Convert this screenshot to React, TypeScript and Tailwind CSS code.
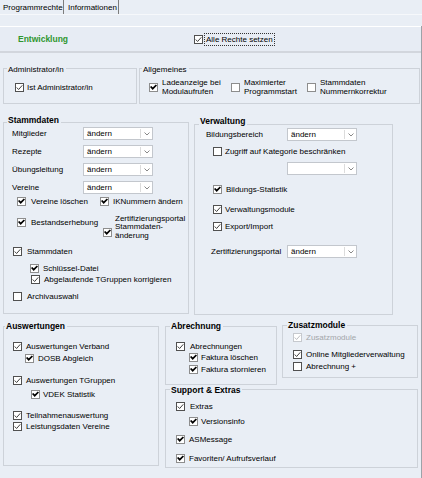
import React from 'react';

type Kind = 'thin' | 'bold' | 'empty' | 'emptyLight' | 'disabled';

function Box({ kind }: { kind: Kind }) {
  const stroke =
    kind === 'bold' || kind === 'emptyLight' ? '#8d8d8d' : kind === 'disabled' ? '#c6c9ce' : '#505050';
  return (
    <svg width="9" height="9" viewBox="0 0 9 9" className="block shrink-0">
      <rect x="0.5" y="0.5" width="8" height="8" fill="#ffffff" stroke={stroke} />
      {kind === 'thin' && (
        <polyline points="1.7,4.5 3.6,6.5 7.3,2.3" fill="none" stroke="#2b2b2b" strokeWidth="0.9" />
      )}
      {kind === 'bold' && (
        <polyline
          points="2.2,4.1 3.7,5.7 6.8,2.6"
          fill="none"
          stroke="#000000"
          strokeWidth="1.7"
          strokeLinecap="square"
        />
      )}
      {kind === 'disabled' && (
        <polyline points="1.7,4.5 3.6,6.5 7.3,2.3" fill="none" stroke="#b4b7bb" strokeWidth="0.9" />
      )}
    </svg>
  );
}

function Check({
  kind,
  children,
  className = '',
  gap = 'gap-[4px]',
  muted = false,
}: {
  kind: Kind;
  children: React.ReactNode;
  className?: string;
  gap?: string;
  muted?: boolean;
}) {
  return (
    <div className={`flex items-center h-[9px] ${gap} ${className}`}>
      <Box kind={kind} />
      <span className={`leading-[9px] whitespace-nowrap ${muted ? 'text-[#a3a6aa]' : ''}`}>{children}</span>
    </div>
  );
}

function Select({ value = 'ändern', className = '' }: { value?: string; className?: string }) {
  return (
    <div className={`w-[70px] h-[13px] shrink-0 bg-white border border-[#c3c7cd] flex items-center ${className}`}>
      <span className="flex-1 pl-[3px] leading-[11px] whitespace-nowrap">{value}</span>
      <span className="w-px h-[9px] bg-[#dcdcdc]" />
      <span className="w-[11px] flex justify-center">
        <svg width="6" height="4" viewBox="0 0 6 4" className="block">
          <polyline points="0.5,0.5 3,3 5.5,0.5" fill="none" stroke="#7b7b7b" strokeWidth="0.9" />
        </svg>
      </span>
    </div>
  );
}

function Group({
  title,
  bold = true,
  legendCls,
  className,
  children,
}: {
  title: string;
  bold?: boolean;
  legendCls: string;
  className: string;
  children: React.ReactNode;
}) {
  return (
    <fieldset className={`border border-[#cdd2d9] shrink-0 ${className}`}>
      <legend
        className={`pl-[1px] pr-[2px] leading-[9px] whitespace-nowrap ${legendCls} ${
          bold ? 'font-bold text-[8.5px]' : ''
        }`}
      >
        {title}
      </legend>
      {children}
    </fieldset>
  );
}

export default function App() {
  return (
    <div className="w-[422px] h-[478px] overflow-hidden bg-[#e9eef5] text-black text-[8px] leading-[9px] font-['Liberation_Sans',Arial,sans-serif]">
      {/* Tabs */}
      <div className="flex h-[15px] border-b border-[#f6f8fb]">
        <div className="w-[64px] h-full pl-[3px] pt-[1px] leading-[13px] border-r border-[#7d7d7d] whitespace-nowrap">
          Programmrechte
        </div>
        <div className="w-[55px] h-full pl-[4px] pt-[1px] leading-[13px] border-r border-[#7d7d7d] whitespace-nowrap">
          Informationen
        </div>
      </div>

      {/* Content area */}
      <div className="mt-[11px] w-[422px] h-[452px] border-r border-[#9da2a8]">
        {/* Header */}
        <div className="h-[27px] border-t border-white border-b-2 border-b-[#d2d6dd] bg-[#e7ecf4] flex items-center">
          <span className="pl-[18px] w-[194px] font-bold text-[8.5px] text-[#2f962f] whitespace-nowrap">
            Entwicklung
          </span>
          <Box kind="thin" />
          <span className="ml-[1px] h-[13px] border border-dotted border-[#333] pl-[1px] pr-[1px] leading-[11px] whitespace-nowrap">
            Alle Rechte setzen
          </span>
        </div>

        {/* Row 1 */}
        <div className="mt-[10px] flex items-start">
          <Group title="Administrator/in" bold={false} legendCls="ml-[3px] pt-[2px]" className="ml-[3px] w-[134px] h-[41px]">
            <Check kind="thin" className="mt-[9px] ml-[11px]" gap="gap-[3px]">
              Ist Administrator/in
            </Check>
          </Group>
          <Group title="Allgemeines" bold={false} legendCls="ml-[2px] pt-[2px]" className="ml-[2px] w-[281px] h-[41px]">
            <div className="mt-[5px] flex items-start">
              <div className="ml-[9px] w-[82px] flex items-center gap-[4px] h-[17px]">
                <Box kind="bold" />
                <span className="leading-[8.3px] whitespace-nowrap">
                  Ladeanzeige bei
                  <br />
                  Modulaufrufen
                </span>
              </div>
              <div className="w-[76px] flex items-center gap-[4px] h-[17px]">
                <Box kind="emptyLight" />
                <span className="leading-[8.3px] whitespace-nowrap">
                  Maximierter
                  <br />
                  Programmstart
                </span>
              </div>
              <div className="flex items-center gap-[4px] h-[17px]">
                <Box kind="emptyLight" />
                <span className="leading-[8.3px] whitespace-nowrap">
                  Stammdaten
                  <br />
                  Nummernkorrektur
                </span>
              </div>
            </div>
          </Group>
        </div>

        {/* Row 2 */}
        <div className="mt-[12px] flex items-start">
          <Group title="Stammdaten" legendCls="ml-[3px] pb-[4px]" className="ml-[3px] w-[186px] h-[198px]">
            <div className="mt-[-2px] flex flex-col gap-[5px]">
              {['Mitglieder', 'Rezepte', 'Übungsleitung', 'Vereine'].map((l) => (
                <div key={l} className="flex items-center h-[13px]">
                  <span className="ml-[8px] w-[71px] whitespace-nowrap">{l}</span>
                  <Select />
                </div>
              ))}
            </div>
            <div className="mt-[3px] flex items-center">
              <Check kind="bold" className="ml-[13px] w-[83px]" gap="gap-[5px]">
                Vereine löschen
              </Check>
              <Check kind="bold" gap="gap-[4px]">
                IKNummern ändern
              </Check>
            </div>
            <div className="mt-[9px] flex items-start">
              <Check kind="bold" className="ml-[13px] w-[86px] mt-[3px]" gap="gap-[5px]">
                Bestandserhebung
              </Check>
              <div className="flex items-start gap-[3px]">
                <div className="mt-[13px]">
                  <Box kind="bold" />
                </div>
                <span className="leading-[8.3px] whitespace-nowrap">
                  Zertifizierungsportal
                  <br />
                  Stammdaten-
                  <br />
                  änderung
                </span>
              </div>
            </div>
            <Check kind="thin" className="mt-[7px] ml-[9px]" gap="gap-[5px]">
              Stammdaten
            </Check>
            <Check kind="bold" className="mt-[8px] ml-[26px]" gap="gap-[4px]">
              Schlüssel-Datei
            </Check>
            <Check kind="thin" className="mt-[2px] ml-[27px]" gap="gap-[4px]">
              Abgelaufende TGruppen korrigieren
            </Check>
            <Check kind="empty" className="mt-[8px] ml-[9px]" gap="gap-[5px]">
              Archivauswahl
            </Check>
          </Group>

          <Group title="Verwaltung" legendCls="ml-[4px] pb-[6px]" className="ml-[5px] mt-[1px] w-[199px] h-[198px]">
            <div className="mt-[-4px] flex items-center h-[13px]">
              <span className="ml-[11px] w-[81px] whitespace-nowrap">Bildungsbereich</span>
              <Select />
            </div>
            <Check kind="empty" className="mt-[6px] ml-[18px]" gap="gap-[3px]">
              Zugriff auf Kategorie beschränken
            </Check>
            <Select value="" className="mt-[6px] ml-[92px]" />
            <Check kind="bold" className="mt-[10px] ml-[18px]" gap="gap-[4px]">
              Bildungs-Statistik
            </Check>
            <Check kind="thin" className="mt-[11px] ml-[18px]" gap="gap-[3px]">
              Verwaltungsmodule
            </Check>
            <Check kind="thin" className="mt-[8px] ml-[18px]" gap="gap-[3px]">
              Export/Import
            </Check>
            <div className="mt-[14px] flex items-center h-[13px]">
              <span className="ml-[16px] w-[76px] whitespace-nowrap">Zertifizierungsportal</span>
              <Select />
            </div>
          </Group>
        </div>

        {/* Row 3 */}
        <div className="mt-[6px] flex items-start">
          <Group title="Auswertungen" legendCls="ml-[1px]" className="ml-[3px] mt-[1px] w-[156px] h-[144px]">
            <Check kind="thin" className="mt-[11px] ml-[9px]" gap="gap-[4px]">
              Auswertungen Verband
            </Check>
            <Check kind="bold" className="mt-[3px] ml-[21px]" gap="gap-[4px]">
              DOSB Abgleich
            </Check>
            <Check kind="thin" className="mt-[13px] ml-[9px]" gap="gap-[4px]">
              Auswertungen TGruppen
            </Check>
            <Check kind="bold" className="mt-[5px] ml-[27px]" gap="gap-[3px]">
              VDEK Statistik
            </Check>
            <Check kind="thin" className="mt-[12px] ml-[9px]" gap="gap-[4px]">
              Teilnahmenauswertung
            </Check>
            <Check kind="thin" className="mt-[2px] ml-[9px]" gap="gap-[4px]">
              Leistungsdaten Vereine
            </Check>
          </Group>

          <div className="ml-[6px] flex flex-col">
            <div className="flex items-start">
              <Group title="Abrechnung" legendCls="ml-[4px]" className="mt-[1px] w-[112px] h-[63px]">
                <Check kind="thin" className="mt-[11px] ml-[10px]" gap="gap-[5px]">
                  Abrechnungen
                </Check>
                <Check kind="bold" className="mt-[2px] ml-[23px]" gap="gap-[3px]">
                  Faktura löschen
                </Check>
                <Check kind="bold" className="mt-[3px] ml-[23px]" gap="gap-[3px]">
                  Faktura stornieren
                </Check>
              </Group>
              <Group title="Zusatzmodule" legendCls="ml-[4px]" className="ml-[5px] w-[136px] h-[57px]">
                <Check kind="disabled" muted className="mt-[3px] ml-[10px]" gap="gap-[4px]">
                  Zusatzmodule
                </Check>
                <Check kind="thin" className="mt-[8px] ml-[10px]" gap="gap-[4px]">
                  Online Mitgliederverwaltung
                </Check>
                <Check kind="empty" className="mt-[3px] ml-[10px]" gap="gap-[4px]">
                  Abrechnung +
                </Check>
              </Group>
            </div>
            <Group title="Support & Extras" legendCls="ml-[4px] pt-[2px]" className="mt-[-1px] w-[253px] h-[84px]">
              <Check kind="thin" className="mt-[7px] ml-[10px]" gap="gap-[5px]">
                Extras
              </Check>
              <Check kind="bold" className="mt-[6px] ml-[23px]" gap="gap-[3px]">
                Versionsinfo
              </Check>
              <Check kind="bold" className="mt-[9px] ml-[10px]" gap="gap-[4px]">
                ASMessage
              </Check>
              <Check kind="bold" className="mt-[10px] ml-[10px]" gap="gap-[4px]">
                Favoriten/ Aufrufsverlauf
              </Check>
            </Group>
          </div>
        </div>
      </div>
    </div>
  );
}
